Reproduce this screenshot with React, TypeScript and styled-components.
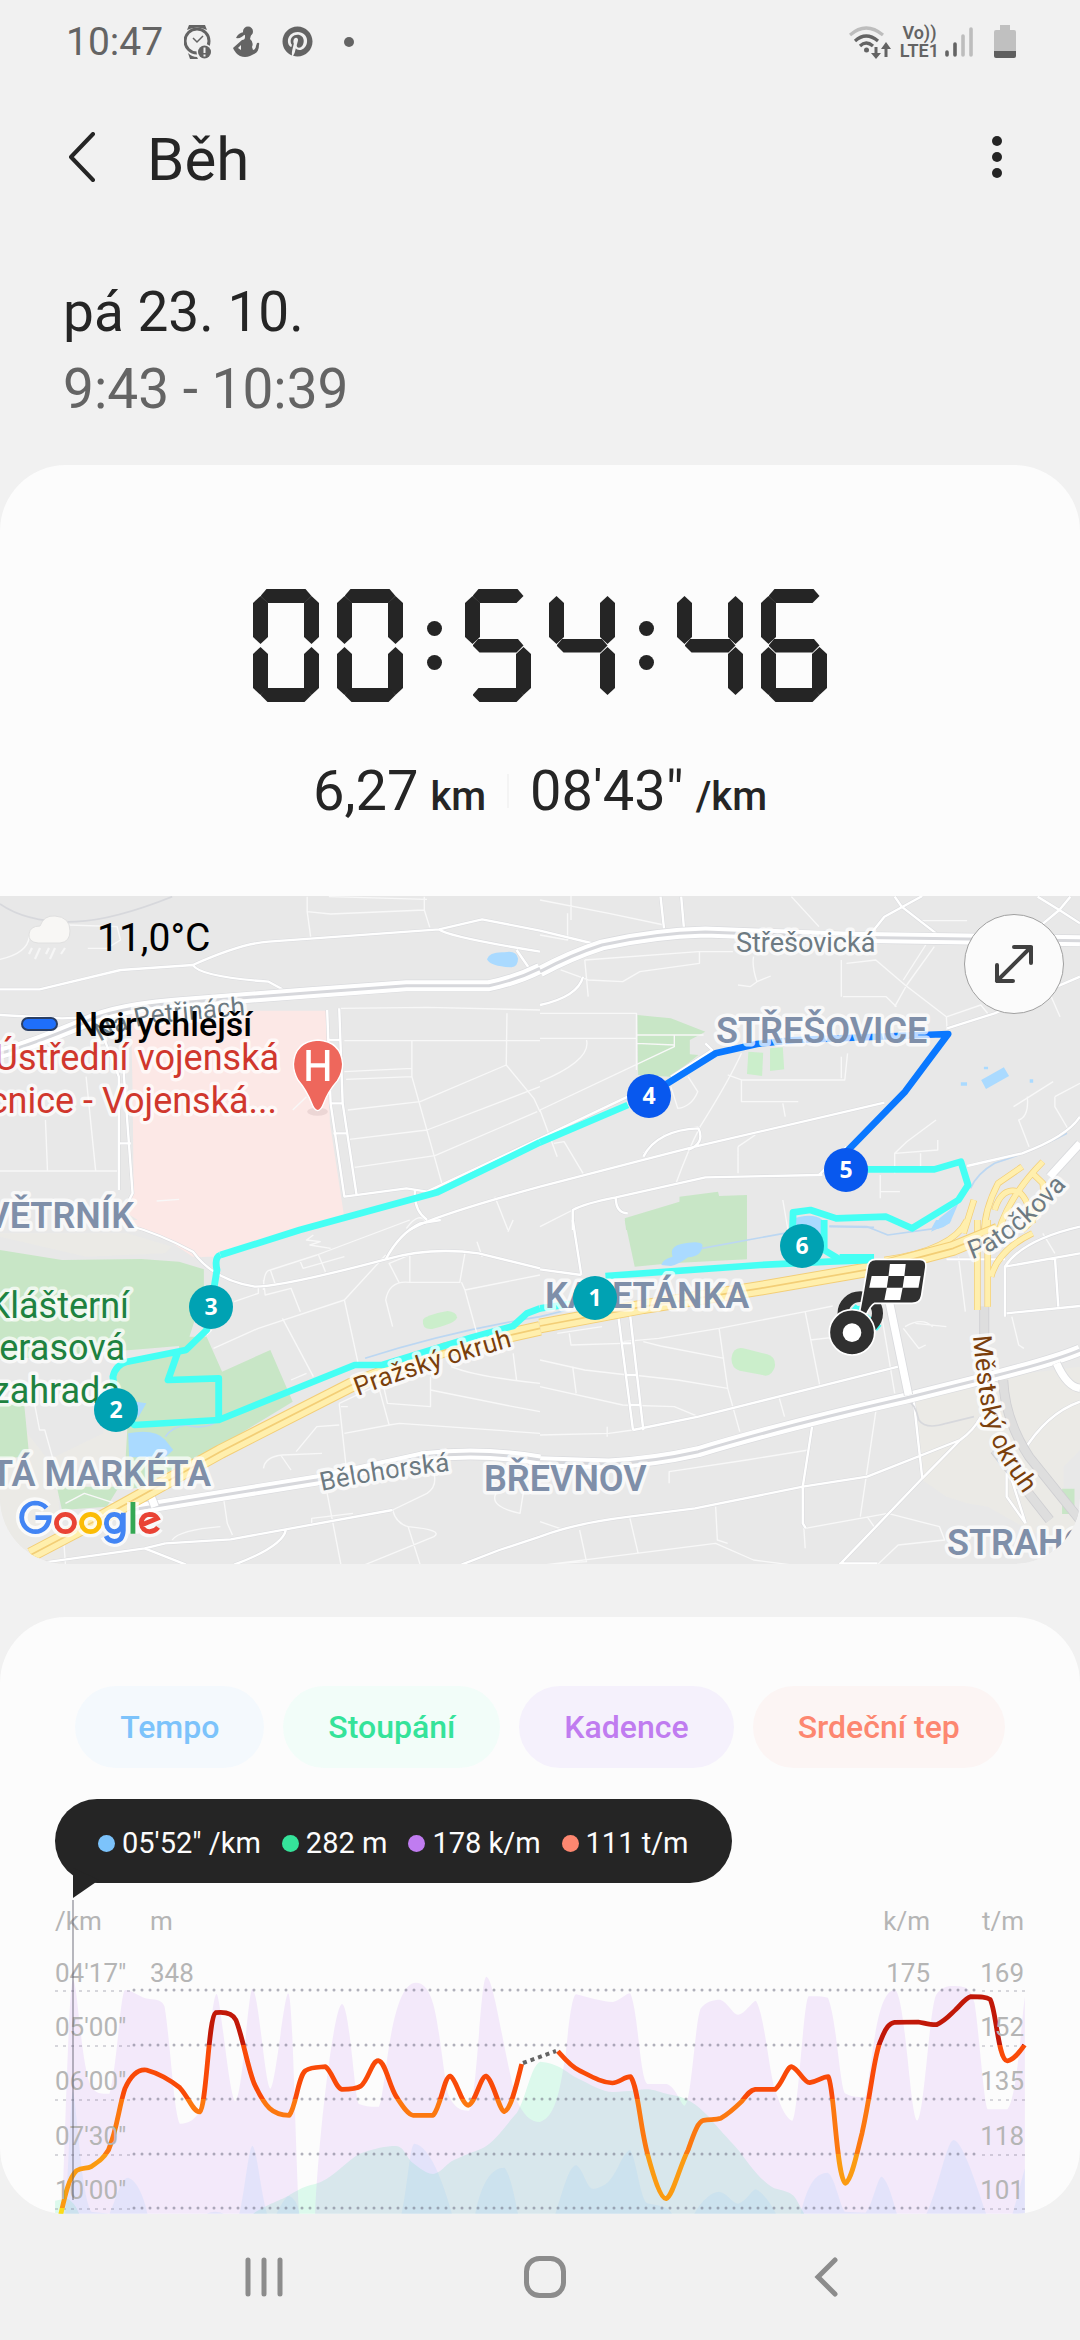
import React from "react";
import styled, { createGlobalStyle } from "styled-components";
import { FaPinterest } from "react-icons/fa";

const GlobalStyle = createGlobalStyle`
  * { box-sizing: border-box; }
  body {
    margin: 0;
    background: #f1f1f1;
    color: #252525;
    font-family: Roboto, "Noto Sans", sans-serif;
  }
  button {
    border: 0;
    padding: 0;
    background: none;
    color: inherit;
    font: inherit;
    cursor: pointer;
  }
  svg { display: block; }
`;

/* ---------- Status bar ---------- */

const StatusBar = styled.header`
  display: flex;
  align-items: center;
  justify-content: space-between;
  height: 80px;
  padding: 3px 64px 0 66px;
  color: #646464;
`;

const StatusGroup = styled.div<{ $gap: number }>`
  display: flex;
  align-items: center;
  gap: ${(p) => p.$gap}px;
`;

const StatusTime = styled.span`
  font-size: 39px;
  line-height: 46px;
`;

const NetworkLabel = styled.span`
  display: flex;
  flex-direction: column;
  margin-right: -3px;
  font-size: 18px;
  font-weight: 600;
  line-height: 18px;
  text-align: center;
`;

const WatchIcon = () => (
  <svg width="28" height="34" viewBox="0 0 28 34" fill="none">
    <path d="M5 0h16l2 5q-10-5-20 0zM4 28q4 4 9 4l1 2H6z" fill="#646464" />
    <circle cx="13" cy="16" r="12" stroke="#646464" strokeWidth="3" />
    <path d="M9 13l4 4 6-6" stroke="#646464" strokeWidth="1.5" />
    <circle cx="20.500" cy="27" r="8" fill="#f1f1f1" />
    <circle cx="20.500" cy="27" r="6.500" fill="#646464" />
    <path d="M20.500 22.500v5.500M20.500 29.500v2" stroke="#f1f1f1" strokeWidth="2" />
  </svg>
);

const AthleteIcon = () => (
  <svg width="28" height="31" viewBox="0 0 28 31" fill="#646464">
    <circle cx="15" cy="5.500" r="5" />
    <path d="M11 6Q5 7 3 12q5 1 9-4z" />
    <path d="M12 9h6l-1 4q4 3 2 8l1 3q3-1 3-4l1-3q3-1 2 2 0 7-5 9l-4 2q-5 2-10 0-5-3-7-8l9-8q3 0 3-3z" />
    <path d="M8 19l-3 3 3 2z" fill="#f1f1f1" />
  </svg>
);

const WifiIcon = () => (
  <svg width="42" height="34" viewBox="0 0 42 34" fill="none" strokeWidth="3.200">
    <path d="M1 10Q17-4 34 10" stroke="#bdbdbd" />
    <path d="M6 16q11-10 23 0M11 21q6-6 13 0" stroke="#646464" />
    <circle cx="17.500" cy="25" r="2.500" fill="#646464" />
    <path d="M27 22v9M37 32V21" stroke="#646464" strokeWidth="3" />
    <path d="M22 28h10l-5 6zM32 24l5-7 5 7z" fill="#646464" />
  </svg>
);

const SignalIcon = () => (
  <svg width="28" height="31" viewBox="0 0 28 31" strokeWidth="3.600" strokeLinecap="round">
    <path d="M2 26v3M10 18v11" stroke="#646464" />
    <path d="M18 10v19M26 3v26" stroke="#bdbdbd" />
  </svg>
);

const BatteryIcon = () => (
  <svg width="34" height="33" viewBox="-12 0 34 33">
    <path d="M6 0h10v5h4q2 0 2 2v20H0V7q0-2 2-2h4z" fill="#c0c0c0" />
    <path d="M0 26h22v5q0 2-2 2H2q-2 0-2-2z" fill="#5f5f5f" />
  </svg>
);

/* ---------- Title ---------- */

const TitleBar = styled.div`
  display: flex;
  align-items: center;
  height: 154px;
  padding: 0 58px 0 68px;
`;

const BackButton = styled.button`
  display: flex;
  align-items: center;
  width: 79px;
  height: 84px;
`;

const Title = styled.h1`
  flex: 1;
  margin: 0;
  padding-top: 6px;
  font-size: 60px;
  font-weight: 400;
  line-height: 72px;
`;

const MenuButton = styled.button`
  display: flex;
  align-items: center;
  justify-content: center;
  width: 50px;
  height: 84px;
`;

const DateBlock = styled.section`
  padding: 40px 63px 37px;
  font-size: 55px;
  line-height: 77px;
`;

const DateLine = styled.div<{ $muted?: boolean }>`
  color: ${(p) => (p.$muted ? "#646464" : "#252525")};
`;

/* ---------- Summary card ---------- */

const Card = styled.section<{ $top: number }>`
  overflow: hidden;
  padding-top: ${(p) => p.$top}px;
  border-radius: 66px;
  background: #fcfcfc;
`;

const Clock = styled.div`
  display: flex;
  justify-content: center;
  gap: 18px;
`;

const Digit = styled.span`
  display: grid;
  width: 66px;
  height: 113px;
`;

const HorizontalSegment = styled.span<{ $at: string }>`
  grid-area: 1 / 1;
  align-self: ${(p) => p.$at};
  justify-self: center;
  width: 51px;
  height: 14px;
  background: #252525;
  clip-path: polygon(0 50%, 6px 0, 45px 0, 100% 50%, 44px 100%, 7px 100%);
`;

const VerticalSegment = styled.span<{ $side: string; $row: string }>`
  grid-area: 1 / 1;
  align-self: ${(p) => p.$row};
  justify-self: ${(p) => p.$side};
  width: 15px;
  height: 48px;
  margin: 7px 0;
  background: #252525;
  clip-path: polygon(50% 0, 100% 7px, 100% 41px, 50% 100%, 0 41px, 0 7px);
`;

const ClockColon = styled.span`
  display: flex;
  flex-direction: column;
  align-items: center;
  justify-content: center;
  gap: 19px;
  width: 26px;
`;

const ColonDot = styled.span`
  width: 15px;
  height: 15px;
  border-radius: 50%;
  background: #252525;
`;

/* Lit segments: top, upper left, upper right, middle, lower left, lower right, bottom */
const SEGMENTS: Record<string, string> = {
  "0": "1110111",
  "4": "0111010",
  "5": "1101011",
  "6": "1101111",
};

const ClockDigit = ({ value }: { value: string }) => {
  const lit = SEGMENTS[value];
  return (
    <Digit>
      {lit[0] === "1" && <HorizontalSegment $at="start" />}
      {lit[1] === "1" && <VerticalSegment $side="start" $row="start" />}
      {lit[2] === "1" && <VerticalSegment $side="end" $row="start" />}
      {lit[3] === "1" && <HorizontalSegment $at="center" />}
      {lit[4] === "1" && <VerticalSegment $side="start" $row="end" />}
      {lit[5] === "1" && <VerticalSegment $side="end" $row="end" />}
      {lit[6] === "1" && <HorizontalSegment $at="end" />}
    </Digit>
  );
};

const SegmentClock = ({ time }: { time: string }) => (
  <Clock role="img" aria-label={time}>
    {time.split("").map((c, i) =>
      c === ":" ? (
        <ClockColon key={i}>
          <ColonDot />
          <ColonDot />
        </ClockColon>
      ) : (
        <ClockDigit key={i} value={c} />
      )
    )}
  </Clock>
);

const Stats = styled.div`
  display: flex;
  justify-content: center;
  align-items: center;
  gap: 21px;
  padding: 54px 0 70px;
`;

const Stat = styled.span`
  display: flex;
  align-items: baseline;
  gap: 12px;
  height: 70px;
  font-size: 56px;
  line-height: 70px;
`;

const Unit = styled.span`
  font-size: 40px;
  font-weight: 500;
`;

const StatDivider = styled.span`
  width: 2px;
  height: 34px;
  background: #f4f4f4;
`;

/* ---------- Map ---------- */

const MapFrame = styled.div`
  position: relative;
`;

const MapSvg = styled.svg`
  width: 100%;
  height: auto;
  font-family: Roboto, "Noto Sans", sans-serif;
`;

const Weather = styled.div`
  position: absolute;
  top: 18px;
  left: 28px;
  display: flex;
  align-items: center;
  gap: 26px;
  color: #000;
  font-size: 39px;
  line-height: 48px;
`;

const Legend = styled.div`
  position: absolute;
  top: 108px;
  left: 21px;
  display: flex;
  align-items: center;
  gap: 16px;
  color: #000;
  font-size: 34px;
  font-weight: 500;
  line-height: 40px;
`;

const LegendSwatch = styled.span`
  width: 37px;
  height: 14px;
  border: 2px solid #2b3f63;
  border-radius: 7px;
  background: #1f6ffb;
`;

const ExpandButton = styled.button`
  position: absolute;
  top: 18px;
  right: 16px;
  display: flex;
  align-items: center;
  justify-content: center;
  width: 100px;
  height: 100px;
  border: 1px solid #a0a0a0;
  border-radius: 50%;
  background: #fbfbfb;
`;

const CloudIcon = () => (
  <svg width="43" height="46" viewBox="0 0 43 46" fill="none">
    <path
      d="M10 28Q0 27 1 19q1-8 11-8Q16 0 27 1q15 1 15 15 0 11-10 12z"
      fill="#f8f7f5"
      stroke="#e0e0e0"
    />
    <path
      d="M4 33l-3 6M12 33l-5 11M21 33l-3 6M27 33l-5 11M37 33l-4 6"
      stroke="#f6f6f6"
      strokeWidth="2.200"
    />
  </svg>
);

/* The map is split in quarters, each with its own fine-grained unit grid. */
const QUARTERS = {
  nw: "translate(0 -6) scale(.34439 .33333)",
  ne: "translate(540 -6) scale(.34439 .33333)",
  sw: "translate(0 324) scale(.34439 .33333)",
  se: "translate(540 324) scale(.34439 .33333)",
};
type Quarter = keyof typeof QUARTERS;
const ALL: Quarter[] = ["nw", "ne", "sw", "se"];

const Layer = ({
  paths,
  color,
  width,
  fill = false,
}: {
  paths: Partial<Record<Quarter, string>>;
  color: string;
  width?: number;
  fill?: boolean;
}) => (
  <>
    {ALL.filter((q) => paths[q]).map((q) => (
      <path
        key={q}
        d={paths[q]}
        transform={QUARTERS[q]}
        fill={fill ? color : "none"}
        stroke={fill ? "none" : color}
        strokeWidth={width}
        strokeLinejoin="round"
      />
    ))}
  </>
);

const HOSPITAL = {
  nw: "M380 362H948L958 700 1000 985 870 1025 640 1100H560L370 970 388 910 385 600Z",
  sw: "M345 0H960L640 100 585 112Q480 50 385 22Z",
};
const SAND = {
  sw: "M0 540Q80 640 140 720L300 640V520L370 590V800L170 810 175 1034H110Q20 990 0 860ZM0 50L250 110 480 100 500 80 370 40H0Z",
  se: "M1080 545L1340 470 1568 440V690L1520 740V850L1568 900V1000L1420 930 1300 860 1240 850 1180 830 1110 780Z",
};
const PARK = {
  sw: "M0 90L180 120 410 117 520 125 592 148V215L550 350 600 350 645 455 785 390 850 545 620 690 480 760 430 800 340 810 310 860 180 870 165 800 360 800 370 620 325 500 345 430 520 400 520 378 380 390 0 420ZM0 550L70 550 85 710 0 715Z",
  ne: "M283 375L380 385 480 425 435 450V493L460 495 380 560 285 555ZM246 985L405 935V920L517 905 520 918 601 915V1020H250Z",
  se: "M246 0H601V118L380 130 275 140ZM1516 806H1552V882H1516Z",
};
const PITCH = {
  sw: "M1228 300Q1235 285 1300 273 1325 275 1327 292 1325 310 1255 327 1225 330 1228 300Z",
  ne: "M605 485L648 488 645 558 601 552ZM668 475L705 472 709 538 668 543Z",
  se: "M556 415Q560 380 590 385L660 403Q685 410 682 440 675 465 655 467L580 452Q555 445 556 415Z",
};
const WATER = {
  nw: "M1414 208Q1420 185 1465 187 1500 180 1504 205 1505 230 1485 232 1425 230 1414 208Z",
  ne: "M1281 570L1347 532 1362 558 1295 597ZM1289 530h12v8h-12zM1222 577h18v10h-18zM1422 568h10v10h-10zM725 990Q790 965 820 990V1040H740ZM1215 940L1190 1000 1135 1025 1160 985Z",
  sw: "M372 640Q450 625 480 660L503 690 480 712H375ZM395 545L425 550 400 595Z",
  se: "M352 135Q355 118 385 110 375 80 410 72 465 60 472 75 470 110 430 112 400 135 380 138ZM760 0H830V40H760ZM1150 0H1195Q1175 30 1135 28Z",
};
const STREAM = {
  sw: "M480 650Q500 620 540 615 590 630 630 605M1060 415Q1300 335 1568 290",
  se: "M0 290L80 270M470 85L720 38M840 18L950 20 1010 45 1150 25",
  ne: "M1530 730Q1450 775 1320 820 1270 850 1250 895M840 1010L970 1012",
};

const MINOR = {
  nw: "M0 208Q80 190 85 140M200 105L340 110 350 150 310 175H255M990 355L1240 352 1568 360M1000 452H1568M1196 450V560L1283 880M1472 370L1470 525 1550 625 1568 665M1000 545L1196 535M1005 568L1195 560M1010 660L1220 635 1470 525M1015 748L1240 720 1568 590M1030 832L1263 797 1560 665M132 690L138 845M250 560L278 845M0 843H345M892 20V65L960 72 1232 60V20M892 65L902 140M1232 60L1248 112M955 20L1240 28M1437 920L1475 1020M1180 1015Q1220 960 1240 1000M850 660L890 620M455 933L520 928",
  ne: "M80 70V150L0 135M0 30L200 70 360 105M90 18V90M130 210L460 185H560M463 185V220L290 245 240 275 140 270 60 240M620 200Q615 230 630 275L610 290 575 285M630 275L670 258M140 320L130 210M0 370H280V540M0 445H280M280 435H475M390 435V470L0 660M135 450Q150 510 0 575M280 460L390 465M730 20L810 110M570 285M875 210V320M1120 165L1055 270M1145 170L1065 285M1065 285L1030 350M880 320H1005L1035 350M890 220L975 210 1060 285 1180 380 1182 420M1182 380L1280 345 1300 370M585 490Q550 570 465 710 430 780 395 880M545 555L585 570H885L893 490M585 570V635H750M705 640L712 680M875 500V565M460 710L360 735 300 790M575 770L625 735M575 770V850M430 560L458 605Q440 650 400 655L380 590M0 660L50 800M40 760L70 755 125 850M1030 850V790L1065 755 1150 690M1030 790L1155 780V750M1105 790V830M988 855V925M988 905H1045M705 930L720 1020M1415 620Q1420 680 1390 690L1420 770M1375 650L1490 575M1495 620V650L1535 720M1495 620L1568 580M1480 310L1510 380M1110 92H1240M0 1010L95 960",
  sw: "M870 120L880 145 1000 110M785 150L800 195M925 105L945 155M765 210Q765 150 785 150L920 105 1190 0M765 180L770 225 845 205 872 275M680 245L750 220V200M620 385L750 325 1000 240 1120 105M615 330L600 345M820 295L910 470M1000 240L1040 430M845 480L890 460M1140 320L1120 240Q1130 180 1190 187H1335L1350 100M1190 187V105L1130 130 1160 190M1340 187L1350 210 1568 165M1350 210L1390 360M1385 65L1400 110M1475 35L1490 0M100 550L115 630H130L160 740M990 560L1010 560M985 550L1005 740M985 550L1130 480M860 695L920 620 985 615M1000 640L1130 615M1090 465L1130 615 1160 610 1568 640M1110 480L1125 550 1250 560V470M1250 510L1490 560 1568 575M1490 400L1500 480M1310 440Q1380 470 1568 490M765 745Q770 710 820 705L935 700M815 705L845 750M650 840L660 910 675 945M1260 760Q1270 800 1240 820L1140 870M950 820L990 1034M1140 870Q1150 910 1185 920L1220 1034M905 910V895L1025 880M500 960Q520 930 640 920M1185 920Q1290 930 1260 950L1060 1034M1440 820Q1420 860 1510 880L1520 815M185 960L190 1034M190 850L245 820 335 850M910 45L890 60 930 65 900 75 960 85",
  se: "M0 420L130 450 255 465M270 465L400 480 545 505M0 500L240 555 390 560 460 590M95 440L105 520M85 340L90 375 240 370M50 340L180 320M240 365L345 355 520 325 770 275 850 258M520 325L545 505 580 635M300 365L350 378 535 415M770 275L812 495M785 360L870 350M990 275L1030 520M695 535L710 590M0 645L200 640 270 630M195 620V650M780 690L600 720 375 755V790M975 575L930 890M770 925L1010 880 1160 920 1175 960 1040 975 980 1034M765 905L770 985M115 930L135 1025 0 1034M260 890L285 1000M20 1034L510 970 620 1020 725 1034M510 860L515 960 545 970M0 905L70 930M950 890L970 920M1090 310L1180 320M1055 325L1100 385 1120 375M1060 320Q1110 290 1140 320M1215 110L1235 275M1370 290L1390 375 1405 385M1460 40L1495 100",
};
const STREETS = {
  nw: "M0 298H115L350 240 560 225Q700 160 780 155L1275 118 1400 88 1568 122M1275 118Q1300 140 1568 185M1500 180L1540 240M560 225Q580 260 780 275L820 298M0 375L180 385 300 380M300 440L345 560V900M360 480V560L385 910 370 940M345 760H380M950 360L960 640 1000 920 1180 895 1240 905M985 355L995 640 1035 912M990 450H950M968 730H1008M960 640H995M1240 905L1568 745M1190 1020Q1250 980 1568 890M1205 900Q1200 960 1240 990",
  ne: "M350 20L360 115M410 20L418 115M0 122L160 162M1030 20L1050 50 1150 130M1110 18L1000 80 965 125M1445 20L1508 60 1568 100M1540 20L1508 60 1450 110M0 345Q110 320 125 260M1182 415L1320 370 1568 260M480 460L500 480 380 560M0 745L255 620M0 890L300 810 450 770 1000 638M300 800Q340 720 460 715 480 760 430 780M95 1020L95 960Q130 940 220 922L480 862 810 855 890 770M220 922Q220 970 255 970M480 862L820 855M1240 828L1400 790Q1530 740 1568 680",
  sw: "M370 15Q460 40 560 95 620 180 740 200 820 200 1120 118 1250 80 1390 100L1568 145M1120 118Q1160 40 1220 10L1280 0M480 970L420 985 110 1030M420 985L540 1034M480 970L670 958 1140 870M830 930Q820 980 680 1034M1340 1034L1450 990 1568 950",
  se: "M95 0L120 165M0 148L120 165M225 270L270 630M260 270L300 630M235 370H265M250 465H285M260 555H295M270 630L460 590 1040 440M790 620L763 800V910L772 925M0 950Q100 910 260 890L450 865 763 800 950 770 1220 660Q1260 630 1280 590M1085 540L1110 775 870 1034M1110 775L1220 660M870 1030H980M1350 290V140Q1400 60 1568 20M1350 140L1568 100M1355 280L1568 258M1495 110L1505 260M1180 118H1350M1400 700Q1470 580 1568 545M1370 780L1410 910M1355 740V830L1410 910",
};
const AVENUE = {
  nw: "M0 490Q90 465 240 400 330 350 560 335L900 308 1180 287 1420 287Q1500 270 1568 235",
  ne: "M0 245Q90 195 180 165 330 130 480 126L900 142 1568 152",
  sw: "M380 870L560 840 920 780 1230 710Q1400 690 1568 720",
  se: "M0 725L200 732Q330 725 460 695 700 620 1060 535L1330 465Q1500 420 1568 390",
};
const SIDE_AVENUES = {
  se: "M1015 250L1070 525M1500 430Q1530 500 1568 505",
  sw: "M435 820L450 860",
  ne: "M1568 760L1480 860",
};
const TRAM = {
  nw: "M0 42Q80 100 220 95 330 90 500 20",
  se: "M1060 535Q1090 550 1100 600 1120 630 1180 610L1260 590",
};
const MOTORWAY = {
  sw: "M90 1004L300 890 640 695 1020 495 1290 390 1568 325",
  se: "M0 318L300 260 640 205 1000 140 1200 85 1330 30",
};
const RAMPS = {
  ne: "M1230 1030L1260 930M1290 1030Q1290 960 1330 880L1400 830M1320 960Q1340 890 1390 905 1420 930 1430 1000M1330 1030Q1360 920 1460 815M1400 1020Q1470 960 1460 880L1430 850",
  se: "M1000 120Q1200 90 1240 0M1270 0V270M1300 0V260M1310 170Q1330 90 1430 40M1200 90L1330 30",
};
const TUNNEL = {
  se: "M1290 260V350M1345 480Q1350 600 1420 710L1568 900M1320 690L1480 900",
};

const ROUTE_CYAN = {
  nw: "M1568 757L1270 907 870 1020 640 1095",
  sw: "M640 105Q622 112 630 150L622 200 613 262 600 330 540 390 370 425Q335 435 328 470L337 570 390 615 635 600 1030 435 1110 435 1370 352 1490 318 1530 280 1568 265M515 400L488 480 635 475V600",
  ne: "M0 757L255 645M950 838H1145L1222 815 1243 885 1215 930 1080 1015 1005 980 860 985 785 960 735 967 732 1060M825 990V1080L870 1108",
  se: "M0 265L100 250M190 168L640 135 840 125 970 120M870 112H970M910 260L985 325",
};
const ROUTE_BLUE = {
  ne: "M316 615L510 490 630 462 740 450 1185 432 1060 605 890 785",
};

const MAP_LABELS: {
  text: string;
  x: number;
  y: number;
  size: number;
  color: string;
  anchor?: "start" | "end";
  weight?: number;
}[] = [
  { text: "Střešovická", x: 736, y: 56, size: 27, color: "#6d7a82" },
  { text: "STŘEŠOVICE", x: 716, y: 147, size: 36, color: "#7f8fa9", weight: 600 },
  { text: "Ústřední vojenská", x: 279, y: 174, size: 36, color: "#d0372d", anchor: "end" },
  { text: "cnice - Vojenská...", x: 277, y: 217, size: 36, color: "#d0372d", anchor: "end" },
  { text: "VĚTRNÍK", x: 134, y: 332, size: 36, color: "#7f8fa9", anchor: "end", weight: 600 },
  { text: "Klášterní", x: 129, y: 422, size: 36, color: "#1e8240", anchor: "end" },
  { text: "erasová", x: 125, y: 464, size: 36, color: "#1e8240", anchor: "end" },
  { text: "zahrada", x: 120, y: 507, size: 36, color: "#1e8240", anchor: "end" },
  { text: "TÁ MARKÉTA", x: 211, y: 590, size: 36, color: "#7f8fa9", anchor: "end", weight: 600 },
  { text: "BŘEVNOV", x: 484, y: 595, size: 36, color: "#7f8fa9", weight: 600 },
  { text: "KAJETÁNKA", x: 545, y: 412, size: 36, color: "#7f8fa9", weight: 600 },
  { text: "STRAHOV", x: 947, y: 659, size: 36, color: "#7f8fa9", weight: 600 },
];

const ROAD_LABELS = [
  { id: "petriny", text: "Na Petřinách", d: "M100 146Q126 130 166 126L300 114", color: "#6d7a82" },
  { id: "prazsky", text: "Pražský okruh", d: "M358 500Q438 470 540 443", color: "#7a3f0c" },
  { id: "belohorska", text: "Bělohorská", d: "M322 595Q390 580 480 572", color: "#6d7a82" },
  { id: "patockova", text: "Patočkova", d: "M972 363Q1020 350 1100 250", color: "#6d7a82" },
  { id: "mestsky", text: "Městský okruh", d: "M973 440C980 520 986 535 1002 566L1062 655", color: "#7a3f0c" },
];

const PINS = [
  { n: "1", x: 595, y: 402, color: "#00a2b3" },
  { n: "2", x: 116, y: 514, color: "#00a2b3" },
  { n: "3", x: 211, y: 411, color: "#00a2b3" },
  { n: "4", x: 649, y: 200, color: "#0858ee" },
  { n: "5", x: 846, y: 274, color: "#0858ee" },
  { n: "6", x: 802, y: 350, color: "#00a2b3" },
];

const LogoStrokes = ({ colors }: { colors: string[] }) => (
  <>
    <path d="M135 864Q122 849 101 849A40 43 0 1 0 143 893H103" stroke={colors[0]} />
    <circle cx="190" cy="909" r="26" stroke={colors[1]} />
    <circle cx="263" cy="909" r="26" stroke={colors[2]} />
    <ellipse cx="332" cy="909" rx="23" ry="26" stroke={colors[0]} />
    <path d="M358 878V932Q356 964 332 964 314 962 308 948" stroke={colors[0]} />
    <path d="M386 846V941" stroke={colors[3]} />
    <path
      d="M411 915L457 895Q450 883 434 883 411 885 410 910 414 935 435 935 450 934 459 922"
      stroke={colors[1]}
    />
  </>
);

const GoogleMark = () => (
  <g transform={QUARTERS.sw} fill="none" role="img" aria-label="Google">
    <g strokeWidth="34" opacity=".75" strokeLinejoin="round">
      <LogoStrokes colors={["#fff", "#fff", "#fff", "#fff"]} />
    </g>
    <g strokeWidth="14">
      <LogoStrokes colors={["#4285f4", "#e94335", "#fbbc05", "#34a853"]} />
    </g>
  </g>
);

const FinishFlag = () => (
  <g transform={QUARTERS.se}>
    <circle cx="930" cy="280" r="50" fill="none" stroke="#303030" strokeWidth="32" />
    <path d="M915 262Q935 250 955 265L925 300Z" fill="#45fff4" />
    <path
      d="M975 118H1103Q1124 118 1120 145L1108 228Q1104 250 1080 250H972Q960 255 945 290L928 275Q940 210 950 145 952 118 975 118Z"
      fill="#303030"
      stroke="#fff"
      strokeWidth="5"
    />
    <path
      d="M1016 132H1062L1058 168H1012ZM963 168H1012L1007 203H956ZM1058 168H1105L1099 203H1053ZM1007 203H1053L1046 240H1000Z"
      fill="#fff"
    />
    <ellipse cx="906" cy="337" rx="66" ry="68" fill="#303030" stroke="#fff" strokeWidth="5" />
    <ellipse cx="906" cy="338" rx="27" ry="28" fill="#fff" />
  </g>
);

const RouteMap = () => (
  <MapSvg viewBox="0 0 1080 668" role="img" aria-label="Mapa trasy">
    <rect width="1080" height="668" fill="#e8e8e8" />
    <Layer paths={SAND} color="#ebeae6" fill />
    <Layer paths={HOSPITAL} color="#fce8e6" fill />
    <Layer paths={PARK} color="#c8e6c6" fill />
    <Layer paths={PITCH} color="#cbeecb" fill />
    <Layer paths={WATER} color="#aadaff" fill />
    <Layer paths={STREAM} color="#bcd7f2" width={5} />
    <Layer paths={MINOR} color="#f8f8f8" width={4} />
    <Layer paths={STREETS} color="#dadbde" width={10} />
    <Layer paths={STREETS} color="#ffffff" width={7} />
    <Layer paths={TRAM} color="#d7d8dc" width={5} />
    <Layer paths={AVENUE} color="#dadbde" width={37} />
    <Layer paths={AVENUE} color="#ffffff" width={33} />
    <Layer paths={AVENUE} color="#d7d8dc" width={9} />
    <Layer paths={SIDE_AVENUES} color="#dadbde" width={27} />
    <Layer paths={SIDE_AVENUES} color="#ffffff" width={22} />
    <Layer paths={TUNNEL} color="#cfcfd2" width={29} />
    <Layer paths={TUNNEL} color="#dedede" width={24} />
    <Layer paths={RAMPS} color="#f3ce76" width={19} />
    <Layer paths={RAMPS} color="#ffefad" width={15} />
    <Layer paths={MOTORWAY} color="#f3ce76" width={44} />
    <Layer paths={MOTORWAY} color="#ffefad" width={38} />
    <Layer paths={MOTORWAY} color="#f3ce76" width={5} />
    <Layer paths={ROUTE_CYAN} color="#45fff4" width={20} />
    <Layer paths={ROUTE_BLUE} color="#0a78ff" width={20} />

    <g stroke="#fff" strokeOpacity=".72" strokeWidth="7" strokeLinejoin="round" paintOrder="stroke">
      {MAP_LABELS.map((l) => (
        <text
          key={l.text}
          x={l.x}
          y={l.y}
          fill={l.color}
          fontSize={l.size}
          fontWeight={l.weight ?? 400}
          textAnchor={l.anchor ?? "start"}
        >
          {l.text}
        </text>
      ))}
      {ROAD_LABELS.map((l) => (
        <g key={l.id}>
          <path id={l.id} d={l.d} fill="none" stroke="none" />
          <text fontSize="26" fill={l.color}>
            <textPath href={`#${l.id}`}>{l.text}</textPath>
          </text>
        </g>
      ))}
    </g>

    <g transform={QUARTERS.nw}>
      <ellipse cx="922" cy="665" rx="30" ry="12" fill="#ecd6d5" />
      <path
        d="M922 662Q912 660 905 640 890 600 865 570 852 545 852 522 856 455 923 450 990 455 995 522 995 548 980 572 952 605 940 640 932 662 922 662Z"
        fill="#ee675c"
        stroke="#fff"
        strokeWidth="4"
      />
      <path d="M896 480V573M950 480V573M896 526H950" stroke="#fff" strokeWidth="13" />
    </g>

    <GoogleMark />

    {PINS.map((p) => (
      <g key={p.n}>
        <circle cx={p.x} cy={p.y} r="22" fill={p.color} />
        <text
          x={p.x}
          y={p.y + 8}
          textAnchor="middle"
          fill="#fff"
          fontSize="23"
          fontWeight="700"
          fontFamily='"Noto Sans", sans-serif'
        >
          {p.n}
        </text>
      </g>
    ))}
    <FinishFlag />
  </MapSvg>
);

/* ---------- Chart card ---------- */

const Chips = styled.div`
  display: flex;
  justify-content: center;
  gap: 19px;
`;

const Chip = styled.button<{ $color: string; $tint: string }>`
  height: 82px;
  padding: 0 45px;
  border-radius: 41px;
  background: ${(p) => p.$tint};
  color: ${(p) => p.$color};
  font-size: 32px;
  font-weight: 500;
`;

const Tooltip = styled.div`
  position: relative;
  display: flex;
  align-items: center;
  gap: 21px;
  width: fit-content;
  height: 84px;
  margin: 31px 0 17px 55px;
  padding: 4px 43px 0;
  border-radius: 42px;
  background: #252525;
  color: #fcfcfc;
  font-size: 29px;
  line-height: 36px;

  &::after {
    content: "";
    position: absolute;
    top: 69px;
    left: 18px;
    width: 26px;
    height: 30px;
    background: #252525;
    clip-path: polygon(0 0, 100% 40%, 0 100%);
  }
`;

const Reading = styled.span<{ $color: string }>`
  display: flex;
  align-items: center;
  gap: 7px;

  &::before {
    content: "";
    width: 17px;
    height: 17px;
    border-radius: 50%;
    background: ${(p) => p.$color};
  }
`;

const METRICS = [
  { name: "Tempo", reading: `05'52" /km`, color: "#7cc3fb", tint: "#f4f9fd" },
  { name: "Stoupání", reading: "282 m", color: "#35e39a", tint: "#f2fdf9" },
  { name: "Kadence", reading: "178 k/m", color: "#c07cf0", tint: "#f5f1fc" },
  { name: "Srdeční tep", reading: "111 t/m", color: "#fd8770", tint: "#fcf5f4" },
];

const ChartSvg = styled.svg`
  width: 100%;
  height: auto;
  font-family: Roboto, "Noto Sans", sans-serif;
`;

const LEFT = "scale(.34439 .33333)";
const RIGHT = "translate(540 0) scale(.34439 .33333)";

const CADENCE = [
  "M180 941C190 700 200 245 212 240 225 240 235 500 265 560 280 583 295 581 318 581 340 500 350 275 363 270 385 270 410 295 430 296 460 300 470 300 478 320 495 430 505 640 522 671 545 672 570 660 582 625 605 500 615 285 629 282 640 285 665 590 683 604 705 590 720 270 733 266 750 270 770 560 785 566 800 560 825 280 837 280 850 290 855 650 868 941ZM915 941C925 700 970 315 993 312 1015 315 1030 600 1042 612 1060 620 1085 621 1100 620 1120 590 1130 248 1208 248 1270 250 1270 400 1300 580 1320 630 1345 633 1362 632 1385 600 1395 235 1412 230 1435 235 1460 450 1500 600 1520 645 1540 666 1568 666V941Z",
  "M0 666C50 650 60 550 75 460 85 350 95 283 105 283 135 290 180 306 212 306 235 300 250 280 262 280 285 330 290 540 312 552H368C395 560 410 617 420 617 440 610 450 360 467 325 480 305 505 299 523 299 545 305 560 344 575 344 595 342 615 305 627 302 655 350 665 540 690 590 705 640 725 662 733 662 750 640 765 300 780 289 800 288 820 289 836 293 860 350 870 550 885 580 905 592 925 592 945 590 965 500 975 270 1030 270 1060 275 1075 655 1095 662 1115 655 1130 330 1150 285 1165 258 1190 257 1207 258 1240 260 1250 265 1262 310 1275 400 1290 620 1300 628H1357C1385 600 1400 340 1408 290V941H0Z",
];
const CLIMB = [
  "M160 941V902L195 895Q215 905 230 941ZM735 941C780 910 830 895 840 885 880 860 900 855 915 852 960 840 1000 790 1042 762 1090 745 1120 738 1150 738 1175 740 1180 775 1200 790 1230 815 1245 822 1258 822 1290 815 1290 790 1330 775 1370 755 1395 750 1412 738 1450 710 1480 660 1500 640 1530 590 1540 500 1568 485V941Z",
  "M0 485C50 490 70 510 100 530 150 555 180 575 212 576 260 575 290 568 315 568 340 570 360 583 385 585 440 595 470 630 490 650 530 700 560 730 580 755 620 810 640 840 680 865 720 875 735 880 745 900L767 941H0Z",
];
const PACE = [
  "M190 941C200 800 205 580 212 575 222 600 235 880 265 935L318 941C340 890 350 835 372 833 400 840 420 900 428 941ZM600 941Q625 930 650 941ZM695 941C710 880 722 740 733 737 745 745 755 860 775 941ZM803 941Q830 885 840 888 860 895 870 941ZM1166 941C1185 850 1190 735 1203 731 1250 735 1290 860 1312 941ZM1380 941C1400 840 1430 803 1465 803 1485 830 1495 900 1504 941Z",
  "M45 941C70 860 85 798 105 796 125 805 135 867 155 867 200 860 210 830 225 805 240 770 255 750 262 750 280 780 290 890 310 910 340 918 370 915 383 941ZM448 941C470 900 500 875 520 875 545 880 560 911 575 911 600 905 615 868 627 868 650 880 670 910 685 941ZM757 941C780 840 805 820 835 818 855 825 870 915 885 935L945 938C965 920 980 830 992 830 1010 840 1025 900 1036 941ZM1122 941C1160 860 1180 720 1202 720 1225 725 1260 830 1295 941ZM1372 941C1390 880 1400 830 1408 805V941Z",
];
const HEART = [
  "M176 945C190 880 200 835 222 812 240 800 250 808 265 800 290 782 300 775 315 750 340 690 345 620 363 565 385 515 410 508 425 510 460 520 500 545 522 563 550 595 560 635 580 636 600 620 605 350 626 338 650 335 675 340 685 360 705 410 720 510 740 555 770 620 790 646 840 646 860 620 865 530 887 512 905 500 925 502 945 500 965 515 975 565 993 568 1015 568 1035 567 1048 558 1070 540 1080 482 1098 482 1120 485 1130 560 1152 592 1170 620 1185 645 1200 646H1258C1280 620 1290 530 1307 528 1325 535 1340 615 1360 616 1380 610 1395 530 1411 528 1430 535 1450 632 1464 635 1485 630 1505 530 1515 492",
  "M52 454C70 475 90 500 115 512 150 530 180 548 210 549 230 548 245 530 263 530 285 560 290 680 313 765 330 830 350 895 366 896 385 890 405 800 430 750 450 690 460 665 475 661 495 658 510 660 525 655 550 640 570 620 585 605 600 585 610 570 625 568H683C705 550 715 501 731 500 750 505 765 547 783 548 805 545 820 530 837 530 855 560 860 830 887 850 905 840 920 760 935 700 965 560 970 460 990 420 1005 380 1015 370 1030 367L1098 366C1120 370 1135 375 1152 374 1180 360 1190 345 1207 329 1230 305 1235 295 1250 290 1280 290 1295 290 1307 298 1325 330 1330 480 1357 483 1375 480 1390 460 1407 435",
];

const Halves = ({ paths, ...rest }: { paths: string[] } & React.SVGProps<SVGPathElement>) => (
  <>
    <path d={paths[0]} transform={LEFT} {...rest} />
    <path d={paths[1]} transform={RIGHT} {...rest} />
  </>
);

const ROWS = [
  { y: 90, label: 82, pace: `04'17"`, heart: "169" },
  { y: 145, label: 136, pace: `05'00"`, heart: "152" },
  { y: 199, label: 190, pace: `06'00"`, heart: "135" },
  { y: 254, label: 245, pace: `07'30"`, heart: "118" },
  { y: 308, label: 299, pace: `10'00"`, heart: "101" },
];

const ZONES = [
  { from: 0, to: 434, color: "#c11808" },
  { from: 434, to: 598, color: "#f94a08" },
  { from: 598, to: 762, color: "#fc7810" },
  { from: 762, to: 925, color: "#fb9b12" },
  { from: 925, to: 941, color: "#fbdb18" },
];

const WorkoutChart = () => (
  <ChartSvg viewBox="0 0 1080 314" role="img" aria-label="Graf tréninku">
    <defs>
      <linearGradient id="zones" gradientUnits="userSpaceOnUse" x1="0" y1="0" x2="0" y2="941">
        {ZONES.map((z) => (
          <React.Fragment key={z.from}>
            <stop offset={z.from / 941} stopColor={z.color} />
            <stop offset={z.to / 941} stopColor={z.color} />
          </React.Fragment>
        ))}
      </linearGradient>
    </defs>
    <Halves paths={CLIMB} fill="#dcf9ec" />
    <Halves paths={CADENCE} fill="#c27df0" fillOpacity=".15" />
    <Halves paths={PACE} fill="#7ac4fd" fillOpacity=".13" />
    {ROWS.map((r) => (
      <g key={r.y} stroke="#646478" strokeOpacity=".5">
        <path d={`M55 ${r.y + 1}H130M982 ${r.y + 1}H1025`} strokeWidth="1" strokeDasharray="3 5" />
        <path
          d={`M134 ${r.y}H980`}
          strokeWidth="3"
          strokeLinecap="round"
          strokeDasharray="0 8"
        />
      </g>
    ))}
    <Halves
      paths={HEART}
      fill="none"
      stroke="url(#zones)"
      strokeWidth="14"
      strokeLinejoin="round"
    />
    <path d="M523 163L556 151" stroke="#646464" strokeWidth="4" strokeDasharray="4 4" />
    <g fontSize="26" fill="#b5b5b5">
      <text x="55" y="30">/km</text>
      <text x="150" y="30">m</text>
      <text x="930" y="30" textAnchor="end">k/m</text>
      <text x="1024" y="30" textAnchor="end">t/m</text>
      <text x="150" y="82">348</text>
      <text x="930" y="82" textAnchor="end">175</text>
      {ROWS.map((r) => (
        <React.Fragment key={r.y}>
          <text x="55" y={r.label}>{r.pace}</text>
          <text x="1024" y={r.label} textAnchor="end">{r.heart}</text>
        </React.Fragment>
      ))}
    </g>
    <path d="M73 0V300" stroke="#505060" strokeOpacity=".4" strokeWidth="2" />
  </ChartSvg>
);

const CardGap = styled.div`
  height: 53px;
`;

/* ---------- System navigation ---------- */

const NavBar = styled.nav`
  display: flex;
  justify-content: center;
  height: 126px;
  padding-left: 9px;
`;

const NavButton = styled.button`
  display: flex;
  flex: 0 1 281px;
  align-items: center;
  justify-content: center;
`;

export default function App() {
  return (
    <>
      <GlobalStyle />
      <StatusBar>
        <StatusGroup $gap={21}>
          <StatusTime>10:47</StatusTime>
          <WatchIcon />
          <AthleteIcon />
          <FaPinterest size={31} />
          <svg width="22" height="10" viewBox="0 0 22 10">
            <circle cx="15" cy="5" r="5" fill="#646464" />
          </svg>
        </StatusGroup>
        <StatusGroup $gap={9}>
          <WifiIcon />
          <NetworkLabel>
            <span>Vo))</span>
            <span>LTE1</span>
          </NetworkLabel>
          <SignalIcon />
          <BatteryIcon />
        </StatusGroup>
      </StatusBar>

      <TitleBar>
        <BackButton aria-label="Zpět">
          <svg width="28" height="50" viewBox="0 0 28 50" fill="none">
            <path
              d="M25 2L3 25l22 23"
              stroke="#252525"
              strokeWidth="4"
              strokeLinecap="round"
              strokeLinejoin="round"
            />
          </svg>
        </BackButton>
        <Title>Běh</Title>
        <MenuButton aria-label="Další možnosti">
          <svg width="10" height="42" viewBox="0 0 10 42" fill="#252525">
            <circle cx="5" cy="5" r="5" />
            <circle cx="5" cy="21" r="5" />
            <circle cx="5" cy="37" r="5" />
          </svg>
        </MenuButton>
      </TitleBar>

      <DateBlock>
        <DateLine>pá 23. 10.</DateLine>
        <DateLine $muted>9:43 - 10:39</DateLine>
      </DateBlock>

      <main>
        <Card $top={124}>
          <SegmentClock time="00:54:46" />
          <Stats>
            <Stat>
              6,27 <Unit>km</Unit>
            </Stat>
            <StatDivider />
            <Stat>
              08'43" <Unit>/km</Unit>
            </Stat>
          </Stats>
          <MapFrame>
            <RouteMap />
            <Weather>
              <CloudIcon />
              <span>11,0°C</span>
            </Weather>
            <Legend>
              <LegendSwatch />
              <span>Nejrychlejší</span>
            </Legend>
            <ExpandButton aria-label="Zvětšit mapu">
              <svg width="40" height="40" viewBox="0 0 40 40" fill="none">
                <path
                  d="M3 37L37 3M20 3h17v16M3 21v16h16"
                  stroke="#404040"
                  strokeWidth="4"
                  strokeLinecap="round"
                  strokeLinejoin="round"
                />
              </svg>
            </ExpandButton>
          </MapFrame>
        </Card>

        <CardGap />

        <Card $top={69}>
          <Chips>
            {METRICS.map((m) => (
              <Chip key={m.name} $color={m.color} $tint={m.tint}>
                {m.name}
              </Chip>
            ))}
          </Chips>
          <Tooltip>
            {METRICS.map((m) => (
              <Reading key={m.name} $color={m.color}>
                {m.reading}
              </Reading>
            ))}
          </Tooltip>
          <WorkoutChart />
        </Card>
      </main>

      <NavBar>
        <NavButton aria-label="Poslední aplikace">
          <svg width="40" height="40" viewBox="0 0 40 40">
            <path d="M4 3v34M20 3v34M36 3v34" stroke="#8c8c8c" strokeWidth="5" strokeLinecap="round" />
          </svg>
        </NavButton>
        <NavButton aria-label="Domů">
          <svg width="42" height="42" viewBox="0 0 42 42">
            <rect x="2.500" y="2.500" width="37" height="37" rx="13" fill="none" stroke="#8c8c8c" strokeWidth="5" />
          </svg>
        </NavButton>
        <NavButton aria-label="Zpět">
          <svg width="24" height="40" viewBox="0 0 24 40">
            <path d="M21 3L4 20l17 17" fill="none" stroke="#8c8c8c" strokeWidth="5" strokeLinecap="round" />
          </svg>
        </NavButton>
      </NavBar>
    </>
  );
}
